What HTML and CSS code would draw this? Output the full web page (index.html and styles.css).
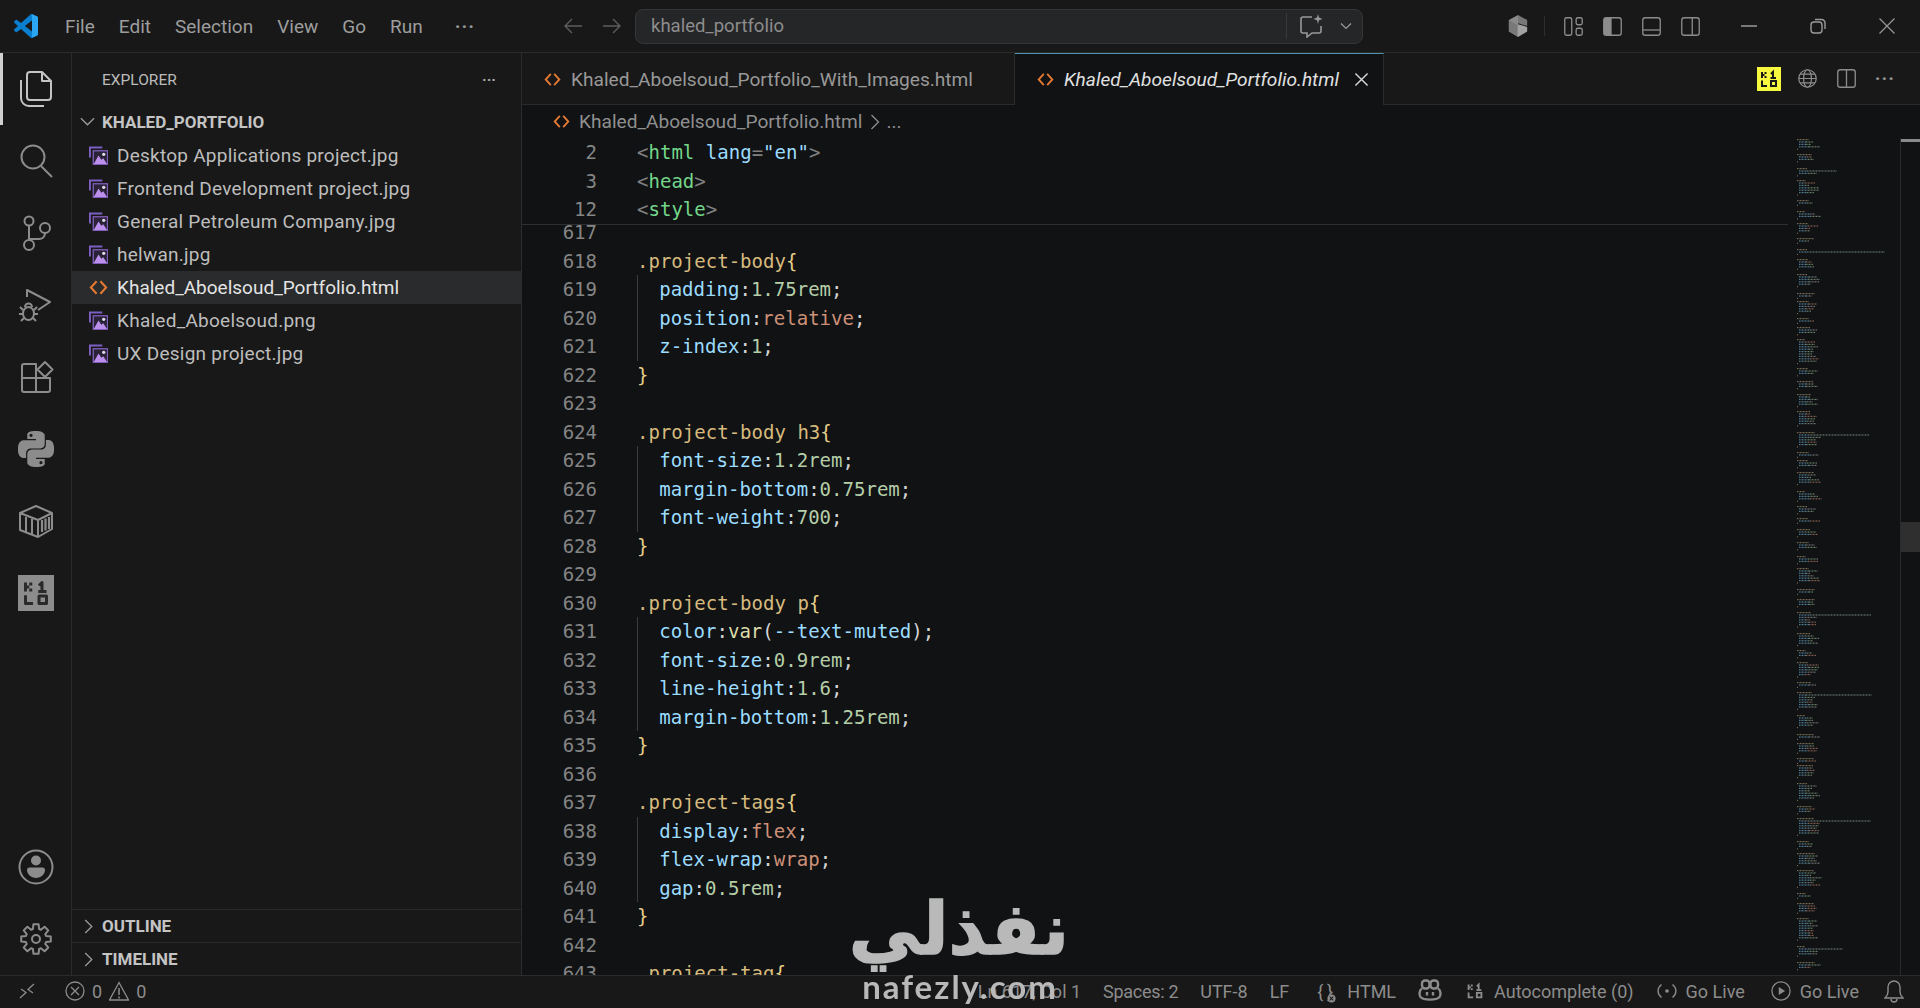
FILE: index.html
```html
<!DOCTYPE html>
<html lang="en">
	<head>
		<meta charset="UTF-8" />
		<meta name="viewport" content="width=device-width, initial-scale=1.0" />
		<title>Khaled_Aboelsoud_Portfolio.html - khaled_portfolio</title>
		<link rel="stylesheet" href="styles.css">
	</head>
	<body>
		<!-- shared icons -->
		<svg class="icon-defs" width="0" height="0">
			<defs>
				<symbol id="i-image" viewBox="0 0 20 20">
					<path d="M1 12V1.5h13" fill="none" stroke="#7d5fc4" stroke-width="2"/>
					<rect x="4.5" y="5" width="15" height="14.5" fill="#2a2338" stroke="#7e5cb8" stroke-width="1.4"/>
					<path d="M5 19 L10 10 L13 14.5 L15 13 L19 19Z" fill="#bd8fec"/>
					<circle cx="15.5" cy="8.7" r="1.7" fill="#e2dcec"/>
				</symbol>
				<symbol id="i-code" viewBox="0 0 20 20">
					<path d="M8 3.5 L2 10 L8 16.5 M12 3.5 L18 10 L12 16.5" fill="none" stroke="#e37933" stroke-width="2.2"/>
				</symbol>
				<symbol id="i-kilo" viewBox="0 0 24 24">
					<path d="M5 5v6M5 8h2.500M8.500 5v2M8.500 9v2M14 7l2-2v6M13.500 11h5.500M5 13.500V19h5M14 14h5v5h-5z" fill="none" stroke-width="2"/>
				</symbol>
				<symbol id="i-split" viewBox="0 0 24 24">
					<rect x="2" y="2" width="20" height="20" rx="3" fill="none" stroke="#8c8c8c" stroke-width="1.5"/>
					<path d="M12 2v20" stroke="#8c8c8c" stroke-width="1.5"/>
				</symbol>
			</defs>
		</svg>

		<header class="titlebar">
			<svg class="logo" viewBox="0 0 100 100">
				<path d="M96.5 10.8 75.9.9a6.2 6.2 0 0 0-7.1 1.2L29.4 38 12.2 25a4.2 4.2 0 0 0-5.3.2l-5.5 5a4.2 4.2 0 0 0 0 6.2L16.3 50 1.4 63.5a4.2 4.2 0 0 0 0 6.2l5.5 5a4.2 4.2 0 0 0 5.3.2L29.4 62l39.4 35.9a6.2 6.2 0 0 0 7.1 1.2l20.6-9.9a6.2 6.2 0 0 0 3.5-5.6V16.4a6.2 6.2 0 0 0-3.5-5.6zM75 72.7 45.1 50 75 27.3z" fill="#0a7fd0"/>
				<path d="M71 .5c1.7-.4 3.4-.2 4.9.4l20.6 9.9a6.2 6.2 0 0 1 3.5 5.6v67.2a6.2 6.2 0 0 1-3.5 5.6l-20.6 9.9c-1.5.6-3.2.8-4.9.4 2.4 1 4-1 4-3.600V4.100C75 1.500 73.400-.5 71 .5z" fill="#2aa6f2"/>
			</svg>
			<nav class="menu">
				<span>File</span><span>Edit</span><span>Selection</span><span>View</span><span>Go</span><span>Run</span><span class="menu-more">···</span>
			</nav>
			<svg class="nav-arrow first" viewBox="0 0 20 20"><path d="M19 10H2M9 3l-7 7 7 7"/></svg>
			<svg class="nav-arrow" viewBox="0 0 20 20"><path d="M1 10h17M11 3l7 7-7 7"/></svg>
			<div class="command-center">
				<span class="cc-text">khaled_portfolio</span>
				<span class="cc-sep"></span>
				<svg class="cc-chat" viewBox="0 0 24 24"><path d="M13 3H4a2 2 0 0 0-2 2v12a2 2 0 0 0 2 2h4v4l5-4h7a2 2 0 0 0 2-2v-5" fill="none" stroke="#999" stroke-width="1.6"/><path d="M19 0l1 3.500L23.500 5 20 6.200 19 10l-1-3.800L14.500 5 18 3.500z" fill="#999"/></svg>
				<svg class="cc-chevron" viewBox="0 0 12 12"><path d="M1 3.500 6 8.500 11 3.500" fill="none" stroke="#999" stroke-width="1.2"/></svg>
			</div>
			<div class="title-actions">
				<svg class="cube" viewBox="0 0 24 24"><path d="M12 0 2 5.500V18l10 6z" fill="#8a8a8a"/><path d="M12 0l10 5.500V12l-10-3z" fill="#777"/><path d="M12 10l10 3v5l-10 6z" fill="#a2a2a2"/><path d="M2 5.500 11 11v12L2 18z" fill="#6e6e6e" opacity=".6"/></svg>
				<span class="title-sep"></span>
				<svg class="layout-icon" viewBox="0 0 24 24"><g fill="none" stroke="#8c8c8c" stroke-width="1.5"><rect x="2" y="2" width="8" height="20" rx="2"/><rect x="15" y="2" width="7" height="8" rx="2"/><rect x="15" y="14" width="7" height="8" rx="2"/></g></svg>
				<svg class="layout-icon" viewBox="0 0 24 24"><path d="M5 2h6v20H5a3 3 0 0 1-3-3V5a3 3 0 0 1 3-3z" fill="#8c8c8c"/><rect x="2" y="2" width="20" height="20" rx="3" fill="none" stroke="#8c8c8c" stroke-width="1.5"/></svg>
				<svg class="layout-icon" viewBox="0 0 24 24"><rect x="2" y="2" width="20" height="20" rx="3" fill="none" stroke="#8c8c8c" stroke-width="1.5"/><path d="M2 16h20" stroke="#8c8c8c" stroke-width="1.5"/></svg>
				<svg class="layout-icon" viewBox="0 0 24 24"><rect x="2" y="2" width="20" height="20" rx="3" fill="none" stroke="#8c8c8c" stroke-width="1.5"/><path d="M14 2v20" stroke="#8c8c8c" stroke-width="1.5"/></svg>
			</div>
			<div class="window-controls">
				<svg viewBox="0 0 16 16"><path d="M0 8h16" stroke="#999" stroke-width="1.5"/></svg>
				<svg viewBox="0 0 16 16"><rect x="1" y="4" width="11" height="11" rx="3" fill="none" stroke="#999" stroke-width="1.4"/><path d="M5 1.500h6.500a3.500 3.500 0 0 1 3.500 3.500v6" fill="none" stroke="#999" stroke-width="1.4"/></svg>
				<svg viewBox="0 0 16 16"><path d="M.5.5l15 15M15.500.5l-15 15" stroke="#999" stroke-width="1.2"/></svg>
			</div>
		</header>

		<div class="workbench">
			<aside class="activity-bar">
				<div class="activity-item active">
					<svg viewBox="0 0 36 36"><path d="M12 1h12l9 9v16a3 3 0 0 1-3 3H12a3 3 0 0 1-3-3V4a3 3 0 0 1 3-3zM24 1v9h9M3 9v18a8 8 0 0 0 8 8h15"/></svg>
				</div>
				<div class="activity-item">
					<svg viewBox="0 0 36 36"><circle cx="15" cy="14" r="11.500"/><path d="M23 23l11 11"/></svg>
				</div>
				<div class="activity-item">
					<svg viewBox="0 0 36 36"><circle cx="11" cy="6" r="4.500"/><circle cx="11" cy="30" r="5"/><circle cx="27" cy="13" r="5"/><path d="M11 10.500V25M27 18c0 4-3 6-6 6H11"/></svg>
				</div>
				<div class="activity-item">
					<svg viewBox="0 0 36 36"><path d="M9 10V3l23 12-12 8M2 20l3 3M19 20l-3 3M1 27h4M16 27h4M3 34l3-3M18 34l-3-3M7 20a3.500 3.500 0 0 1 7 0"/><ellipse cx="10.500" cy="26.500" rx="5.500" ry="6.500"/></svg>
				</div>
				<div class="activity-item">
					<svg viewBox="0 0 36 36"><path d="M4 7a2 2 0 0 1 2-2h12v28H6a2 2 0 0 1-2-2zM4 19h28v12a2 2 0 0 1-2 2H18M27 3l7.500 7.500L27 18l-7.500-7.500z"/></svg>
				</div>
				<div class="activity-item">
					<svg class="filled" viewBox="0 0 24 24"><path d="M14.250.18l.9.2.73.26.59.3.45.32.34.34.25.34.16.33.1.3.04.26.02.2-.01.13V8.500l-.05.63-.13.55-.21.46-.26.38-.3.31-.33.25-.35.19-.35.14-.33.1-.3.07-.26.04-.21.02H8.770l-.69.05-.59.14-.5.22-.41.27-.33.32-.27.35-.2.36-.15.37-.1.35-.07.32-.04.27-.02.21v3.060H3.170l-.21-.03-.28-.07-.32-.12-.35-.18-.36-.26-.36-.36-.35-.46-.32-.59-.28-.73-.21-.88-.14-1.050-.05-1.230.06-1.220.16-1.040.24-.87.32-.71.36-.57.4-.44.42-.33.42-.24.4-.16.36-.1.32-.05.24-.01h.16l.06.01h8.160v-.83H6.180l-.01-2.750-.02-.37.05-.34.11-.31.17-.28.25-.26.31-.23.38-.2.44-.18.51-.15.58-.12.64-.1.71-.06.77-.04.84-.02 1.270.05zm-6.300 1.980l-.23.33-.08.41.08.41.23.34.33.22.41.09.41-.09.33-.22.23-.34.08-.41-.08-.41-.23-.33-.33-.22-.41-.09-.41.09zm13.090 3.950l.28.06.32.12.35.18.36.27.36.35.35.47.32.59.28.73.21.88.14 1.040.05 1.230-.06 1.230-.16 1.040-.24.86-.32.71-.36.57-.4.45-.42.33-.42.24-.4.16-.36.09-.32.05-.24.02-.16-.01h-8.220v.82h5.840l.01 2.760.02.36-.05.34-.11.31-.17.29-.25.25-.31.24-.38.2-.44.17-.51.15-.58.13-.64.09-.71.07-.77.04-.84.01-1.270-.04-1.070-.14-.9-.2-.73-.25-.59-.3-.45-.33-.34-.34-.25-.34-.16-.33-.1-.3-.04-.25-.02-.2.01-.13v-5.340l.05-.64.13-.54.21-.46.26-.38.3-.32.33-.24.35-.2.35-.14.33-.1.3-.06.26-.04.21-.02.13-.01h5.840l.69-.05.59-.14.5-.21.41-.28.33-.32.27-.35.2-.36.15-.36.1-.35.07-.32.04-.28.02-.21V6.070h2.090l.14.01zm-6.470 14.250l-.23.33-.08.41.08.41.23.33.33.23.41.08.41-.08.33-.23.23-.33.08-.41-.08-.41-.23-.33-.33-.23-.41-.08-.41.08z"/></svg>
				</div>
				<div class="activity-item">
					<svg viewBox="0 0 36 36"><path d="M2 10 18 3l16 7v16l-14 8-18-7zM2 10l18 7 14-7M20 17v17M8 14v15M14 16v15"/><path class="thick" d="M24 17v12M27.500 15.500v12M31 14v12"/></svg>
				</div>
				<div class="activity-item">
					<svg class="kilo-big" viewBox="0 0 24 24"><rect width="24" height="24" fill="#8c8c8c"/><use href="#i-kilo" stroke="#2a2a2a"/></svg>
				</div>
				<div class="activity-spacer"></div>
				<div class="activity-item">
					<svg viewBox="0 0 36 36"><circle cx="18" cy="18" r="16.500"/><circle class="solid" cx="18" cy="11.500" r="5"/><path class="solid" d="M9 21a2.500 2.500 0 0 1 2.500-2.500h13A2.500 2.500 0 0 1 27 21c0 4-4 8-9 8s-9-4-9-8z"/></svg>
				</div>
				<div class="activity-item">
					<svg viewBox="-18 -18 36 36"><polygon points="10.040,-3.070 14.770,-2.600 14.770,2.600 10.040,3.070 9.270,4.930 12.290,8.600 8.600,12.290 4.930,9.270 3.070,10.040 2.600,14.770 -2.600,14.770 -3.070,10.040 -4.930,9.270 -8.600,12.290 -12.290,8.600 -9.270,4.930 -10.040,3.070 -14.770,2.600 -14.770,-2.600 -10.040,-3.070 -9.270,-4.930 -12.290,-8.600 -8.600,-12.290 -4.930,-9.270 -3.070,-10.040 -2.600,-14.770 2.600,-14.770 3.070,-10.040 4.930,-9.270 8.600,-12.290 12.290,-8.600 9.270,-4.930"/><circle r="4"/></svg>
				</div>
			</aside>

			<section class="sidebar">
				<div class="sidebar-header">
					<span>EXPLORER</span>
					<span class="sidebar-more">···</span>
				</div>
				<div class="section-row root">
					<svg class="chevron" viewBox="0 0 16 16"><path d="M1 4.500l7 7 7-7"/></svg>
					<span>KHALED_PORTFOLIO</span>
				</div>
				<ul class="file-list">
					<li><svg class="file-icon"><use href="#i-image"/></svg>Desktop Applications project.jpg</li>
					<li><svg class="file-icon"><use href="#i-image"/></svg>Frontend Development project.jpg</li>
					<li><svg class="file-icon"><use href="#i-image"/></svg>General Petroleum Company.jpg</li>
					<li><svg class="file-icon"><use href="#i-image"/></svg>helwan.jpg</li>
					<li class="selected"><svg class="file-icon"><use href="#i-code"/></svg>Khaled_Aboelsoud_Portfolio.html</li>
					<li><svg class="file-icon"><use href="#i-image"/></svg>Khaled_Aboelsoud.png</li>
					<li><svg class="file-icon"><use href="#i-image"/></svg>UX Design project.jpg</li>
				</ul>
				<div class="section-row pane">
					<svg class="chevron" viewBox="0 0 16 16"><path d="M4.500 1l7 7-7 7"/></svg>
					<span>OUTLINE</span>
				</div>
				<div class="section-row pane">
					<svg class="chevron" viewBox="0 0 16 16"><path d="M4.500 1l7 7-7 7"/></svg>
					<span>TIMELINE</span>
				</div>
			</section>

			<main class="editor">
				<div class="tabs">
					<div class="tab">
						<svg class="tab-icon"><use href="#i-code"/></svg>
						<span>Khaled_Aboelsoud_Portfolio_With_Images.html</span>
					</div>
					<div class="tab active">
						<svg class="tab-icon"><use href="#i-code"/></svg>
						<span>Khaled_Aboelsoud_Portfolio.html</span>
						<svg class="tab-close" viewBox="0 0 16 16"><path d="M1.500 1.500l13 13M14.500 1.500l-13 13"/></svg>
					</div>
					<div class="tab-actions">
						<svg class="kilo-yellow" viewBox="0 0 24 24"><rect width="24" height="24" fill="#f8f83e"/><use href="#i-kilo" stroke="#1a1a1a"/></svg>
						<svg class="tab-action" viewBox="0 0 24 24"><g fill="none" stroke="#8c8c8c" stroke-width="1.4"><circle cx="12" cy="12" r="10"/><ellipse cx="12" cy="12" rx="4.500" ry="10"/><path d="M2 12h20M3.500 7h17M3.500 17h17"/></g></svg>
						<svg class="tab-action"><use href="#i-split"/></svg>
						<span class="tab-more">···</span>
					</div>
				</div>

				<div class="breadcrumb">
					<svg class="crumb-icon"><use href="#i-code"/></svg>
					<span>Khaled_Aboelsoud_Portfolio.html</span>
					<svg class="crumb-chevron" viewBox="0 0 10 16"><path d="M1.500 1l7 7-7 7"/></svg>
					<span>...</span>
				</div>

				<div class="editor-body">
					<div class="code-column">
						<div class="sticky-lines">
							<div class="line"><span class="ln">2</span><span class="code"><i class="pn">&lt;</i><i class="tg">html</i> <i class="pr">lang</i><i class="pn">=</i><i class="pr">"en"</i><i class="pn">&gt;</i></span></div>
							<div class="line"><span class="ln">3</span><span class="code"><i class="pn">&lt;</i><i class="tg">head</i><i class="pn">&gt;</i></span></div>
							<div class="line"><span class="ln">12</span><span class="code"><i class="pn">&lt;</i><i class="tg">style</i><i class="pn">&gt;</i></span></div>
						</div>
						<div class="code-lines">
							<div class="line"><span class="ln">617</span></div>
							<div class="line"><span class="ln">618</span><span class="code"><i class="sl">.project-body</i><i class="br">{</i></span></div>
							<div class="line in"><span class="ln">619</span><span class="code"><i class="pr">padding</i>:<i class="nm">1.75rem</i>;</span></div>
							<div class="line in"><span class="ln">620</span><span class="code"><i class="pr">position</i>:<i class="vl">relative</i>;</span></div>
							<div class="line in"><span class="ln">621</span><span class="code"><i class="pr">z-index</i>:<i class="nm">1</i>;</span></div>
							<div class="line"><span class="ln">622</span><span class="code"><i class="br">}</i></span></div>
							<div class="line"><span class="ln">623</span></div>
							<div class="line"><span class="ln">624</span><span class="code"><i class="sl">.project-body h3</i><i class="br">{</i></span></div>
							<div class="line in"><span class="ln">625</span><span class="code"><i class="pr">font-size</i>:<i class="nm">1.2rem</i>;</span></div>
							<div class="line in"><span class="ln">626</span><span class="code"><i class="pr">margin-bottom</i>:<i class="nm">0.75rem</i>;</span></div>
							<div class="line in"><span class="ln">627</span><span class="code"><i class="pr">font-weight</i>:<i class="nm">700</i>;</span></div>
							<div class="line"><span class="ln">628</span><span class="code"><i class="br">}</i></span></div>
							<div class="line"><span class="ln">629</span></div>
							<div class="line"><span class="ln">630</span><span class="code"><i class="sl">.project-body p</i><i class="br">{</i></span></div>
							<div class="line in"><span class="ln">631</span><span class="code"><i class="pr">color</i>:<i class="fn">var</i>(<i class="pr">--text-muted</i>);</span></div>
							<div class="line in"><span class="ln">632</span><span class="code"><i class="pr">font-size</i>:<i class="nm">0.9rem</i>;</span></div>
							<div class="line in"><span class="ln">633</span><span class="code"><i class="pr">line-height</i>:<i class="nm">1.6</i>;</span></div>
							<div class="line in"><span class="ln">634</span><span class="code"><i class="pr">margin-bottom</i>:<i class="nm">1.25rem</i>;</span></div>
							<div class="line"><span class="ln">635</span><span class="code"><i class="br">}</i></span></div>
							<div class="line"><span class="ln">636</span></div>
							<div class="line"><span class="ln">637</span><span class="code"><i class="sl">.project-tags</i><i class="br">{</i></span></div>
							<div class="line in"><span class="ln">638</span><span class="code"><i class="pr">display</i>:<i class="vl">flex</i>;</span></div>
							<div class="line in"><span class="ln">639</span><span class="code"><i class="pr">flex-wrap</i>:<i class="vl">wrap</i>;</span></div>
							<div class="line in"><span class="ln">640</span><span class="code"><i class="pr">gap</i>:<i class="nm">0.5rem</i>;</span></div>
							<div class="line"><span class="ln">641</span><span class="code"><i class="br">}</i></span></div>
							<div class="line"><span class="ln">642</span></div>
							<div class="line"><span class="ln">643</span><span class="code"><i class="sl">.project-tag</i><i class="br">{</i></span></div>
						</div>
					</div>
					<canvas id="minimap" class="minimap" width="112" height="838"></canvas>
					<div class="scrollbar">
						<div class="scroll-cursor"></div>
						<div class="scroll-thumb"></div>
					</div>
				</div>
			</main>
		</div>

		<footer class="statusbar">
			<div class="status-left">
				<svg class="st-remote" viewBox="0 0 16 16"><path d="M1 15l6-5.500L2 6M15 1 9 6.500l5 3.500" fill="none" stroke="#8c8c8c" stroke-width="1.300"/></svg>
				<svg class="st-icon" viewBox="0 0 20 20"><circle cx="10" cy="10" r="9" fill="none" stroke="#8c8c8c" stroke-width="1.300"/><path d="M6 6l8 8M14 6l-8 8" stroke="#8c8c8c" stroke-width="1.300"/></svg>
				<span class="st-count">0</span>
				<svg class="st-icon" viewBox="0 0 20 20"><path d="M10 1.500 19.500 19H.5z" fill="none" stroke="#8c8c8c" stroke-width="1.300"/><path d="M10 7v7M10 15.500v2" stroke="#8c8c8c" stroke-width="1.500"/></svg>
				<span class="st-count">0</span>
			</div>
			<div class="status-right">
				<span>Ln 617, Col 1</span>
				<span class="st-spaces">Spaces: 2</span>
				<span>UTF-8</span>
				<span class="st-eol">LF</span>
				<span class="st-group"><span class="st-braces">{&thinsp;}<svg viewBox="0 0 10 10"><circle cx="5" cy="5" r="4.500" fill="#8c8c8c"/><path d="M3 3l4 4M7 3 3 7" stroke="#181818" stroke-width="1.200"/></svg></span>HTML</span>
				<svg class="st-copilot" viewBox="0 0 24 24"><g fill="none" stroke="#8c8c8c" stroke-width="2.400"><rect x="4" y="1.500" width="7.500" height="8" rx="3"/><rect x="12.500" y="1.500" width="7.500" height="8" rx="3"/><path d="M4 9.500C1 11 1 16 2.500 18c3 3.500 16 3.500 19 0 1.500-2 1.500-7-1.500-8.500"/></g><path d="M9 13v3.500M15 13v3.500" stroke="#8c8c8c" stroke-width="2.400"/></svg>
				<span class="st-group"><svg class="st-kilo" viewBox="0 0 24 24"><use href="#i-kilo" stroke="#8c8c8c"/></svg>Autocomplete (0)</span>
				<span class="st-group st-wide"><svg class="st-icon wide" viewBox="0 0 24 20"><path d="M6 3c-5 4-5 10 0 14M18 3c5 4 5 10 0 14" fill="none" stroke="#8c8c8c" stroke-width="1.500"/><circle cx="12" cy="10" r="2" fill="#8c8c8c"/></svg>Go Live</span>
				<span class="st-group st-wide"><svg class="st-icon wide" viewBox="0 0 22 22"><circle cx="11" cy="11" r="10" fill="none" stroke="#8c8c8c" stroke-width="1.400"/><path d="M8.500 6.500v9l7-4.500z" fill="#8c8c8c"/></svg>Go Live</span>
				<svg class="st-bell" viewBox="0 0 20 24"><path d="M1 19h18c-2-2-3-3-3-6V8A6 6 0 0 0 4 8v5c0 3-1 4-3 6zM7 20c0 4 6 4 6 0" fill="none" stroke="#8c8c8c" stroke-width="1.400"/></svg>
			</div>
		</footer>

		<!-- site watermark over the screenshot -->
		<div class="watermark">
			<div class="wm-arabic" dir="rtl" lang="ar">نفذلي</div>
			<div class="wm-latin">nafezly.com</div>
		</div>

		<script src="minimap.js"></script>
	</body>
</html>
```

FILE: styles.css
```css
* {
	box-sizing: border-box;
}

html,
body {
	height: 100%;
	margin: 0;
}

body {
	display: flex;
	flex-direction: column;
	overflow: hidden;
	position: relative;
	font-family: Roboto, 'Liberation Sans', sans-serif;
	font-size: 19px;
	background-color: #181818;
	color: #9d9d9d;
}

.icon-defs {
	position: absolute;
}

/* Title bar */
.titlebar {
	display: flex;
	align-items: center;
	height: 53px;
	flex-shrink: 0;
	border-bottom: 1px solid #2b2b2b;
	padding-left: 14px;
}

.logo {
	width: 24px;
	height: 24px;
	margin-right: 15px;
}

.menu {
	display: flex;
	width: 490px;
}

.menu span {
	padding: 0 12px;
}

.menu-more {
	font-weight: bold;
	letter-spacing: 1px;
	margin-left: 8px;
}

.nav-arrow {
	width: 20px;
	height: 20px;
	fill: none;
	stroke: #5c5c5c;
	stroke-width: 1.4;
}

.nav-arrow.first {
	margin-left: 20px;
	margin-right: 19px;
}

.command-center {
	display: flex;
	align-items: center;
	width: 728px;
	height: 35px;
	flex-shrink: 0;
	margin-left: 13px;
	padding: 0 10px 0 15px;
	background-color: #252628;
	border: 1px solid #353638;
	border-radius: 8px;
	color: #8d8d8d;
	font-size: 18.500px;
}

.cc-text {
	flex-grow: 1;
}

.cc-sep {
	width: 1px;
	height: 26px;
	margin-right: 12px;
	background-color: #38393b;
}

.cc-chat {
	width: 24px;
	height: 24px;
	margin-right: 17px;
}

.cc-chevron {
	width: 12px;
	height: 12px;
}

.title-actions {
	display: flex;
	align-items: center;
	margin-left: 144px;
}

.cube {
	width: 22px;
	height: 24px;
}

.title-sep {
	width: 1px;
	height: 20px;
	margin: 0 18px 0 15px;
	background-color: #2e2e2e;
}

.layout-icon {
	width: 21px;
	height: 21px;
	margin-right: 18px;
}

.window-controls {
	display: flex;
	align-items: center;
	margin-left: 22px;
	gap: 53px;
}

.window-controls svg {
	width: 16px;
	height: 16px;
}

/* Main area */
.workbench {
	display: flex;
	flex-grow: 1;
	min-height: 0;
}

.activity-bar {
	display: flex;
	flex-direction: column;
	flex-shrink: 0;
	width: 72px;
	border-right: 1px solid #2b2b2b;
}

.activity-item {
	display: flex;
	align-items: center;
	justify-content: center;
	height: 72px;
	flex-shrink: 0;
}

.activity-item.active {
	border-left: 3px solid #d0d0d0;
	padding-right: 3px;
}

.activity-item svg {
	width: 36px;
	height: 36px;
	fill: none;
	stroke: #8c8c8c;
	stroke-width: 2;
	stroke-linejoin: round;
}

.activity-item.active svg {
	stroke: #c4c4c4;
}

.activity-item svg.filled {
	fill: #8c8c8c;
	stroke: none;
}

.activity-item .solid {
	fill: #8c8c8c;
	stroke: none;
}

.activity-item .thick {
	stroke-width: 2.200;
}

.activity-item svg.kilo-big {
	stroke: none;
}

.activity-spacer {
	flex-grow: 1;
}

/* Sidebar */
.sidebar {
	display: flex;
	flex-direction: column;
	flex-shrink: 0;
	width: 450px;
	border-right: 1px solid #2b2b2b;
}

.sidebar-header {
	display: flex;
	align-items: center;
	justify-content: space-between;
	height: 53px;
	padding: 0 25px 0 30px;
	font-size: 15.500px;
	color: #bbb;
}

.sidebar-more {
	font-weight: bold;
	color: #aaa;
}

.section-row {
	display: flex;
	align-items: center;
	height: 33px;
	flex-shrink: 0;
	font-size: 17px;
	font-weight: bold;
	color: #c4c4c4;
}

.section-row.root {
	padding: 0 0 2px 8px;
}

.section-row.pane {
	padding-left: 9px;
	border-top: 1px solid #2b2b2b;
}

.chevron {
	width: 15px;
	height: 15px;
	margin-right: 7px;
	fill: none;
	stroke: #9a9a9a;
	stroke-width: 1.400;
}

.section-row.pane .chevron {
	margin-right: 6px;
}

.file-list {
	flex-grow: 1;
	margin: 0;
	padding: 0;
	list-style: none;
}

.file-list li {
	display: flex;
	align-items: center;
	height: 33px;
	padding-left: 17px;
	color: #bdbdbd;
	letter-spacing: 0.25px;
}

.file-list li.selected {
	background-color: #2a2b2c;
	color: #e4e4e4;
	letter-spacing: 0;
}

.file-icon {
	width: 19px;
	height: 19px;
	margin-right: 9px;
}

/* Editor */
.editor {
	display: flex;
	flex-direction: column;
	flex-grow: 1;
	min-width: 0;
	background-color: #101214;
}

.tabs {
	display: flex;
	height: 52px;
	flex-shrink: 0;
	background-color: #181818;
	border-bottom: 1px solid #2b2b2b;
	font-size: 19.100px;
}

.tab {
	display: flex;
	align-items: center;
	width: 493px;
	padding: 1px 0 0 22px;
	border-right: 1px solid #2b2b2b;
	color: #999;
}

.tab.active {
	width: 369px;
	height: 52px;
	padding-top: 0;
	background-color: #101214;
	border-top: 1px solid #4d93ac;
	color: #e0e0e0;
	font-style: italic;
}

.tab-icon {
	width: 17px;
	height: 17px;
	margin-right: 10px;
	flex-shrink: 0;
}

.tab-close {
	width: 15px;
	height: 15px;
	margin-left: 15px;
	fill: none;
	stroke: #d8d8d8;
	stroke-width: 1.500;
}

.tab-actions {
	display: flex;
	align-items: center;
	margin-left: auto;
	padding-right: 25px;
}

.kilo-yellow {
	width: 24px;
	height: 24px;
	margin-right: 16px;
}

.tab-action {
	width: 21px;
	height: 21px;
	margin-right: 18px;
}

.tab-more {
	font-weight: bold;
	letter-spacing: 1px;
	color: #999;
}

.breadcrumb {
	display: flex;
	align-items: center;
	height: 33px;
	flex-shrink: 0;
	padding-left: 31px;
	color: #8f8f8f;
	font-size: 19.100px;
}

.crumb-icon {
	width: 17px;
	height: 17px;
	margin-right: 9px;
}

.crumb-chevron {
	width: 10px;
	height: 16px;
	margin: 0 6px 0 8px;
	fill: none;
	stroke: #8f8f8f;
	stroke-width: 1.300;
}

.editor-body {
	display: flex;
	flex-grow: 1;
	min-height: 0;
}

.code-column {
	flex-grow: 1;
	min-width: 0;
	overflow: hidden;
	font-family: 'DejaVu Sans Mono', 'Liberation Mono', monospace;
	font-size: 19.050px;
	color: #d4d4d4;
}

.sticky-lines {
	position: relative;
	z-index: 1;
	height: 87px;
	background-color: #101214;
	border-bottom: 1px solid #2e2f31;
}

.code-lines {
	margin-top: -7px;
}

.line {
	display: flex;
	height: 28.500px;
	line-height: 28.500px;
	white-space: pre;
}

.ln {
	width: 75px;
	flex-shrink: 0;
	margin-right: 40px;
	text-align: right;
	color: #858585;
}

.line.in .code {
	border-left: 1px solid #3c3c3c;
	padding-left: 21.200px;
}

.code i {
	font-style: normal;
}

.tg {
	color: #74d68a;
}

.pn {
	color: #808080;
}

.pr {
	color: #9cdcfe;
}

.sl {
	color: #d7ba7d;
}

.br {
	color: #e8d089;
}

.nm {
	color: #b5cea8;
}

.vl {
	color: #ce9178;
}

.fn {
	color: #dcdcaa;
}

.minimap {
	flex-shrink: 0;
	width: 112px;
	height: 838px;
}

.scrollbar {
	position: relative;
	flex-shrink: 0;
	width: 20px;
	border-left: 1px solid #2b2b2b;
}

.scroll-cursor {
	position: absolute;
	top: 1px;
	left: 0;
	right: 0;
	height: 3px;
	background-color: #8a8a8a;
}

.scroll-thumb {
	position: absolute;
	top: 384px;
	left: 0;
	right: 0;
	height: 30px;
	background-color: #2f2f2f;
}

/* Status bar */
.statusbar {
	display: flex;
	align-items: center;
	justify-content: space-between;
	height: 33px;
	flex-shrink: 0;
	padding: 0 16px 2px 19px;
	background-color: #181818;
	border-top: 1px solid #2b2b2b;
	font-size: 18px;
	color: #8c8c8c;
}

.status-left,
.status-right {
	display: flex;
	align-items: center;
}

.status-right {
	gap: 22px;
}

.st-spaces {
	letter-spacing: -0.3px;
}

.st-eol {
	margin-right: 6px;
}

.st-wide + .st-wide,
.st-bell {
	margin-left: 3px;
}

.st-group {
	display: flex;
	align-items: center;
	gap: 8px;
}

.st-remote {
	width: 16px;
	height: 16px;
	margin-right: 30px;
}

.st-icon {
	width: 20px;
	height: 20px;
}

.st-icon.wide {
	width: 22px;
}

.st-count {
	margin: 0 7px;
}

.st-braces {
	position: relative;
	width: 19px;
	margin-right: 3px;
	white-space: nowrap;
}

.st-braces svg {
	position: absolute;
	right: 0;
	bottom: -1px;
	width: 9px;
	height: 9px;
}

.st-copilot {
	width: 24px;
	height: 24px;
}

.st-kilo {
	width: 22px;
	height: 22px;
}

.st-bell {
	width: 20px;
	height: 24px;
}

/* Watermark */
.watermark {
	position: absolute;
	top: 885px;
	left: 857px;
	width: 212px;
	text-align: center;
	color: #b9b9b9;
}

.wm-arabic {
	height: 85px;
	font-family: 'DejaVu Sans', sans-serif;
	font-size: 72px;
	font-weight: bold;
	line-height: 88px;
	-webkit-text-stroke: 1.500px #b9b9b9;
}

.wm-latin {
	margin-left: -6px;
	font-family: Lato, 'Open Sans', sans-serif;
	font-size: 33px;
	font-weight: bold;
	line-height: 32px;
	letter-spacing: 2px;
}
```

FILE: minimap.js
```js
// Block start positions read off the minimap, in pixels from its top
const blockStarts = [
	1, 16, 30, 42, 62, 73, 85, 100, 111, 121, 136, 155, 163, 180, 189, 201, 230,
	243, 256, 273, 294, 314, 322, 334, 353, 368, 380, 391, 404, 418, 430, 451,
	461, 474, 495, 512, 524, 544, 554, 577, 596, 605, 620, 627, 645, 668, 680,
	703, 715, 732, 755, 765, 780, 808, 824,
];

// Blocks holding one long declaration: start -> width of that line
const longLines = { 30: 38, 111: 86, 294: 70, 474: 72, 554: 73, 680: 72, 808: 44 };

const canvas = document.getElementById('minimap');
const ctx = canvas.getContext('2d');
const ROW = 2.4;
const LEFT = 9;

// Small repeatable generator so the picture is the same on every load
let seed = 7;
function next(min, max) {
	seed = (seed * 16807) % 2147483647;
	return min + (seed % (max - min + 1));
}

// A run of text in the minimap is faint and broken up, not one solid bar
function drawBar(x, y, width, color) {
	ctx.fillStyle = color;
	for (let px = 0; px < width; px += 1.5) {
		ctx.fillRect(x + px, y, Math.min(1, width - px), 1.2);
	}
}

ctx.globalAlpha = 0.7;

blockStarts.forEach((start, i) => {
	const end = i + 1 < blockStarts.length ? blockStarts[i + 1] : 838;
	const rows = Math.max(2, Math.floor((end - start) / ROW) - 2);

	drawBar(LEFT, start, next(8, 18), '#a08f66');

	for (let r = 1; r < rows; r++) {
		const y = start + r * ROW;
		const prop = next(6, 11);
		const value = next(4, 12);
		const valueColor = ['#8aa886', '#8aa886', '#b07a66', '#969696'][next(0, 3)];
		drawBar(LEFT + 2, y, prop, '#6ba6c4');
		if (r === 1 && longLines[start]) {
			drawBar(LEFT + 2 + prop, y, longLines[start] - prop, '#8a9a92');
		} else {
			drawBar(LEFT + 2 + prop, y, value, valueColor);
		}
	}

	drawBar(LEFT, start + rows * ROW, 1.5, '#a08f66');
});
```
